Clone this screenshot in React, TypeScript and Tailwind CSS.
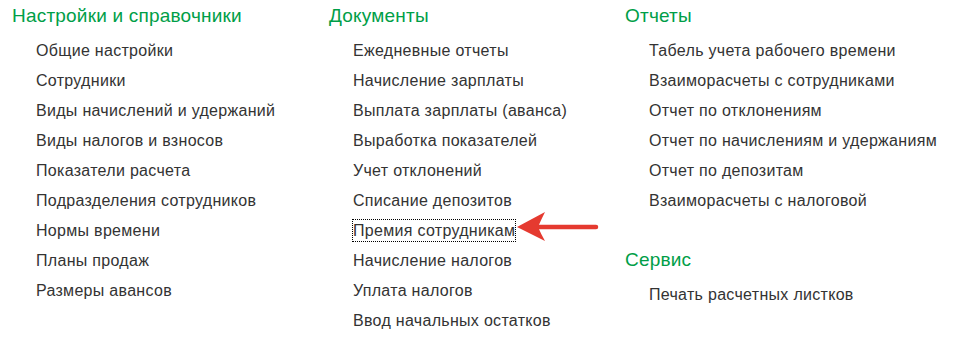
const sections: { title: string; items: string[] }[][] = [
  [
    {
      title: 'Настройки и справочники',
      items: [
        'Общие настройки',
        'Сотрудники',
        'Виды начислений и удержаний',
        'Виды налогов и взносов',
        'Показатели расчета',
        'Подразделения сотрудников',
        'Нормы времени',
        'Планы продаж',
        'Размеры авансов',
      ],
    },
  ],
  [
    {
      title: 'Документы',
      items: [
        'Ежедневные отчеты',
        'Начисление зарплаты',
        'Выплата зарплаты (аванса)',
        'Выработка показателей',
        'Учет отклонений',
        'Списание депозитов',
        'Премия сотрудникам',
        'Начисление налогов',
        'Уплата налогов',
        'Ввод начальных остатков',
      ],
    },
  ],
  [
    {
      title: 'Отчеты',
      items: [
        'Табель учета рабочего времени',
        'Взаиморасчеты с сотрудниками',
        'Отчет по отклонениям',
        'Отчет по начислениям и удержаниям',
        'Отчет по депозитам',
        'Взаиморасчеты с налоговой',
      ],
    },
    {
      title: 'Сервис',
      items: ['Печать расчетных листков'],
    },
  ],
];

const colWidths = ['w-[317px]', 'w-[296px]', 'flex-1'];

// focused item gets the dotted focus rectangle
const focused = 'Премия сотрудникам';

function Section({ title, items, first }: { title: string; items: string[]; first: boolean }) {
  return (
    <div className={first ? '' : 'mt-8'}>
      <h3 className="text-[19px] leading-6 tracking-[0.2px] text-[#009e47] font-normal">{title}</h3>
      <ul className="mt-2 pl-6">
        {items.map((item) => (
          <li
            key={item}
            className="h-[30px] leading-[30px] text-[16px] tracking-[0.3px] text-[#333333] whitespace-nowrap"
          >
            {item === focused ? (
              <span className="inline-block -mx-px border border-dotted border-black leading-[21px]">
                {item}
              </span>
            ) : (
              item
            )}
          </li>
        ))}
      </ul>
    </div>
  );
}

export default function App() {
  return (
    <div
      className="relative w-[956px] h-[340px] bg-white overflow-hidden pl-3 pt-1 flex"
      style={{ fontFamily: '"Liberation Sans", Arial, sans-serif' }}
    >
      {sections.map((col, i) => (
        <div key={i} className={colWidths[i]}>
          {col.map((s, j) => (
            <Section key={s.title} title={s.title} items={s.items} first={j === 0} />
          ))}
        </div>
      ))}

      <svg className="absolute left-[512px] top-[205px]" width="90" height="45" viewBox="0 0 90 45">
        <line x1="27" y1="22" x2="84" y2="22" stroke="#e53a30" strokeWidth="4.5" strokeLinecap="round" />
        <path d="M5 22 L33 7 Q29 15 26 22 Q29 29 33 36 Z" fill="#e53a30" />
      </svg>
    </div>
  );
}
